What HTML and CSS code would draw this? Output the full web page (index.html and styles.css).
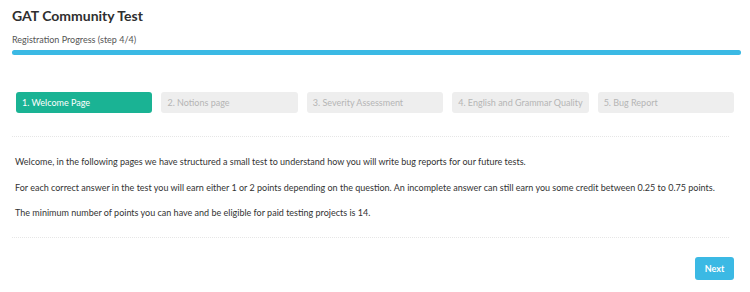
FILE: index.html
```html
<!DOCTYPE html>
<html lang="en">
<head>
    <meta charset="UTF-8">
    <title>GAT Community Test</title>
    <link rel="stylesheet" href="styles.css">
</head>
<body>
    <div class="page">
        <h1>GAT Community Test</h1>
        <div class="progress-label">Registration Progress (step 4/4)</div>
        <div class="progress"><div class="progress-bar"></div></div>

        <div class="steps">
            <div class="step active">1. Welcome Page</div>
            <div class="step">2. Notions page</div>
            <div class="step">3. Severity Assessment</div>
            <div class="step">4. English and Grammar Quality</div>
            <div class="step">5. Bug Report</div>
        </div>

        <div class="content">
            <p>Welcome, in the following pages we have structured a small test to understand how you will write bug reports for our future tests.</p>
            <p>For each correct answer in the test you will earn either 1 or 2 points depending on the question. An incomplete answer can still earn you some credit between 0.25 to 0.75 points.</p>
            <p>The minimum number of points you can have and be eligible for paid testing projects is 14.</p>
        </div>

        <div class="actions">
            <button class="btn-next">Next</button>
        </div>
    </div>
</body>
</html>
```

FILE: styles.css
```css
body {
    margin: 0;
    font-family: Lato, "Liberation Sans", sans-serif;
    background: #fff;
    color: #333;
}
.page {
    padding: 7px 9px 0 12px;
}
h1 {
    margin: 0;
    font-size: 14px;
    font-weight: 700;
    color: #2f2f2f;
    line-height: 18px;
}
.progress-label {
    margin-top: 9px;
    font-size: 9px;
    color: #555;
    line-height: 12px;
}
.progress {
    margin-top: 4px;
    height: 5px;
    background: #d6eef8;
    border-radius: 3px;
}
.progress-bar {
    width: 100%;
    height: 100%;
    background: #3bb9e4;
    border-radius: 3px;
}
.steps {
    display: flex;
    gap: 9px;
    padding: 37px 4px 0 4px;
    margin-right: 3px;
}
.step {
    width: 137px;
    height: 21px;
    line-height: 21px;
    box-sizing: border-box;
    padding-left: 6px;
    font-size: 9px;
    color: #b5b5b5;
    background: #eeeeee;
    border-radius: 3px;
    white-space: nowrap;
}
.step.active {
    background: #1ab394;
    color: #fff;
}
.content {
    margin-top: 23px;
    margin-right: 12px;
    border-top: 1px dotted #e6e6e6;
    border-bottom: 1px dotted #e6e6e6;
    padding: 19px 0 18px 3px;
}
.content p {
    margin: 0 0 13.5px;
    font-size: 9px;
    line-height: 12px;
    color: #333;
}
.content p:last-child {
    margin-bottom: 0;
}
.actions {
    display: flex;
    justify-content: flex-end;
    padding: 19px 7px 0 0;
}
.btn-next {
    width: 39px;
    height: 23px;
    border: none;
    border-radius: 3px;
    background: #3bb9e4;
    color: #fff;
    font-family: Lato, "Liberation Sans", sans-serif;
    font-size: 9px;
    font-weight: 700;
    padding: 0;
}
```
